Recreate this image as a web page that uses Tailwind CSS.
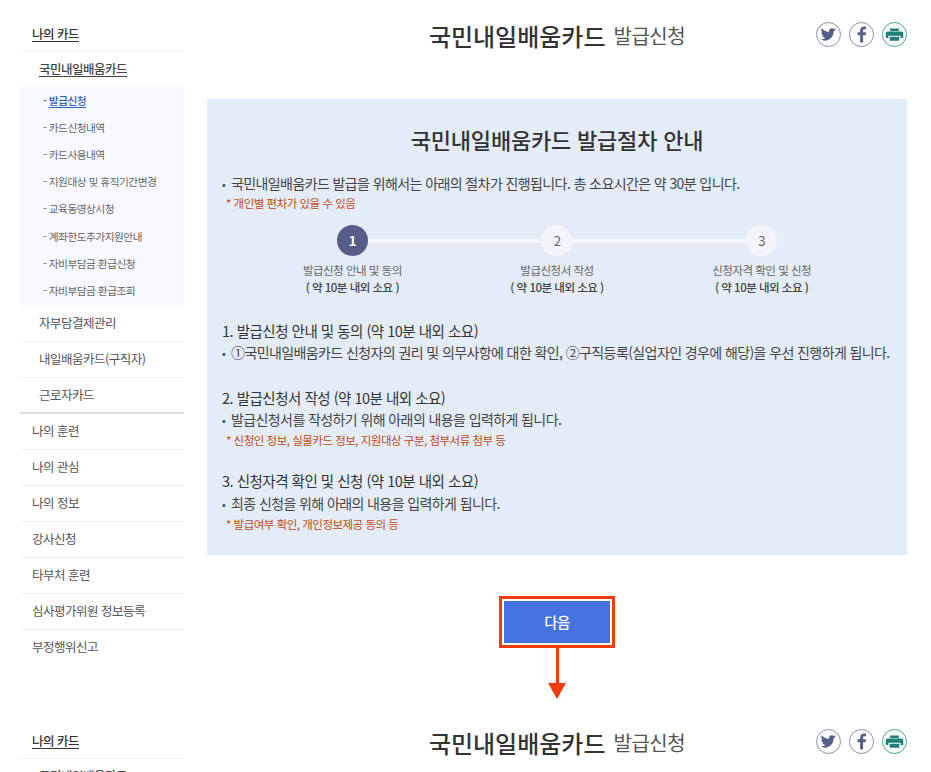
<!DOCTYPE html>
<html lang="ko">
  <head>
    <meta charset="UTF-8" />
    <meta name="viewport" content="width=device-width, initial-scale=1.0" />
    <title>국민내일배움카드 발급신청</title>
    <script src="https://cdn.jsdelivr.net/npm/@tailwindcss/browser@4"></script>
  </head>
  <body class="bg-white">
    <div class="h-[772px] w-[931px] overflow-hidden font-['Noto_Sans_CJK_KR',sans-serif] text-[#444] tracking-[-0.5px]">
      <!-- first capture -->
      <div class="flex h-[707px] items-start pl-5">
        <aside class="w-[164px] shrink-0 pt-[16px] text-[12.5px]">
          <div class="flex h-[36px] items-center border-b border-[#f3f3f3] pt-[1px] pl-3 font-medium text-[#333]">
            <span class="underline underline-offset-2">나의 카드</span>
          </div>
          <div class="flex h-[35px] items-center pl-[19px] font-medium text-[#444]">
            <span class="underline underline-offset-2">국민내일배움카드</span>
          </div>
          <ul class="h-[219px] bg-[#f8f9fe] pl-[23px] text-[10.7px] text-[#666]">
            <li class="flex h-[27.2px] items-center font-medium text-[#2f5cc4]"><span>-&nbsp;<span class="underline underline-offset-2">발급신청</span></span></li>
            <li class="flex h-[27.2px] items-center">- 카드신청내역</li>
            <li class="flex h-[27.2px] items-center">- 카드사용내역</li>
            <li class="flex h-[27.2px] items-center">- 지원대상 및 휴직기간변경</li>
            <li class="flex h-[27.2px] items-center">- 교육동영상시청</li>
            <li class="flex h-[27.2px] items-center">- 계좌한도추가지원안내</li>
            <li class="flex h-[27.2px] items-center">- 자비부담금 환급신청</li>
            <li class="flex h-[27.2px] items-center">- 자비부담금 환급조회</li>
          </ul>
          <div class="flex h-[36px] items-center border-b border-[#f3f3f3] pl-[19px] text-[#555]">자부담결제관리</div>
          <div class="flex h-[36px] items-center border-b border-[#f3f3f3] pl-[19px] text-[#555]">내일배움카드(구직자)</div>
          <div class="flex h-[36px] items-center border-b-2 border-[#ddd] pl-[19px] text-[#555]">근로자카드</div>
          <div class="flex h-[36px] items-center border-b border-[#f0f0f0] pl-3 text-[#555]">나의 훈련</div>
          <div class="flex h-[36px] items-center border-b border-[#f0f0f0] pl-3 text-[#555]">나의 관심</div>
          <div class="flex h-[36px] items-center border-b border-[#f0f0f0] pl-3 text-[#555]">나의 정보</div>
          <div class="flex h-[36px] items-center border-b border-[#f0f0f0] pl-3 text-[#555]">강사신청</div>
          <div class="flex h-[36px] items-center border-b border-[#f0f0f0] pl-3 text-[#555]">타부처 훈련</div>
          <div class="flex h-[36px] items-center border-b border-[#f0f0f0] pl-3 text-[#555]">심사평가위원 정보등록</div>
          <div class="flex h-[36px] items-center pb-[2px] pl-3 text-[#555]">부정행위신고</div>
        </aside>

        <main class="ml-[23px] w-[700px] shrink-0">
          <header class="relative flex h-[99px] justify-center pt-[16px]">
            <h1 class="flex h-[40px] items-center gap-2 text-[24px] font-medium tracking-normal text-[#333]">
              국민내일배움카드 <span class="text-[20px] font-normal tracking-[-0.5px] text-[#555]">발급신청</span>
            </h1>
            <div class="absolute top-[22px] right-0 flex gap-[8px]">
              <span class="flex size-[25px] items-center justify-center rounded-full border border-[#8e93b4]">
                <svg viewBox="0 0 24 24" class="size-[19px] fill-[#565d88]"><path d="M22 5.900c-.7.3-1.500.5-2.400.6.9-.5 1.500-1.300 1.800-2.300-.8.5-1.700.8-2.600 1-1.600-1.700-4.400-1.300-5.600.6-.6 1-.7 2-.4 3C9 8.600 5.700 6.900 3.500 4.200 2.300 6.100 2.900 8.600 4.700 9.800c-.7 0-1.300-.2-1.900-.5 0 2 1.400 3.800 3.300 4.200-.6.2-1.200.2-1.800.1.5 1.700 2.100 2.800 3.800 2.900-1.700 1.300-3.800 1.900-6 1.600 6.100 3.900 14.200.7 15.900-6.600.3-1.100.4-2.300.3-3.400.8-.6 1.400-1.300 1.900-2.200z" /></svg>
              </span>
              <span class="flex size-[25px] items-center justify-center rounded-full border border-[#8e93b4]">
                <svg viewBox="0 0 24 24" class="size-[19px] fill-[#565d88]"><path d="M14 22v-9h3.200l.5-3.700H14V7.200c0-1.100.3-1.800 1.800-1.800h2V2.100C17.400 2 16.300 2 15.100 2 12.300 2 10.300 3.700 10.300 6.800v2.500H7V13h3.300v9z" /></svg>
              </span>
              <span class="flex size-[25px] items-center justify-center rounded-full border-[1.5px] border-[#4aa79c]">
                <svg viewBox="0 0 24 24" class="size-[21px] fill-[#1f8078]"><path d="M7 5h10v3H7zM4 8.500h16a2 2 0 0 1 2 2V16h-3v-2.500H5V16H2v-5.500a2 2 0 0 1 2-2zM6.500 14.500h11V19h-11z" /></svg>
              </span>
            </div>
          </header>

          <section class="h-[456px] bg-[#e4ecf7] pt-[25px] pl-[15px]">
            <h2 class="-ml-[15px] text-center text-[22px] leading-[30px] font-medium tracking-[-0.2px] text-[#333]">국민내일배움카드 발급절차 안내</h2>
            <p class="mt-[19px] text-[14px] leading-[20px] tracking-[-0.6px] text-[#444]"><span class="inline-block w-[9px] text-[11px] leading-none">•</span>국민내일배움카드 발급을 위해서는 아래의 절차가 진행됩니다. 총 소요시간은 약 30분 입니다.</p>
            <p class="pl-[4px] text-[11.5px] leading-[20px] text-[#c24a15]">* 개인별 편차가 있을 수 있음</p>

            <div class="relative mt-[12px] -ml-[15px] grid grid-cols-3 px-[43px] text-center">
              <div class="absolute top-[14px] right-[146px] left-[146px] h-[4px] bg-[#f3f5fa]"></div>
              <div class="relative flex flex-col items-center text-[11.5px] leading-[17px] text-[#666]">
                <span class="mb-[6px] flex size-[31px] items-center justify-center rounded-full bg-[#565d88] text-[13px] font-bold text-white">1</span>
                발급신청 안내 및 동의
                <strong class="font-medium text-[#444]">( 약 10분 내외 소요 )</strong>
              </div>
              <div class="relative flex flex-col items-center text-[11.5px] leading-[17px] text-[#666]">
                <span class="mb-[6px] flex size-[31px] items-center justify-center rounded-full bg-[#f3f5fa] text-[13px]">2</span>
                발급신청서 작성
                <strong class="font-medium text-[#444]">( 약 10분 내외 소요 )</strong>
              </div>
              <div class="relative flex flex-col items-center text-[11.5px] leading-[17px] text-[#666]">
                <span class="mb-[6px] flex size-[31px] items-center justify-center rounded-full bg-[#f3f5fa] text-[13px]">3</span>
                신청자격 확인 및 신청
                <strong class="font-medium text-[#444]">( 약 10분 내외 소요 )</strong>
              </div>
            </div>

            <h3 class="mt-[24px] text-[14.5px] leading-[21px] text-[#333]">1. 발급신청 안내 및 동의 (약 10분 내외 소요)</h3>
            <p class="text-[14px] leading-[22px] tracking-[-0.6px]"><span class="inline-block w-[9px] text-[11px] leading-none">•</span>①국민내일배움카드 신청자의 권리 및 의무사항에 대한 확인, ②구직등록(실업자인 경우에 해당)을 우선 진행하게 됩니다.</p>

            <h3 class="mt-[24px] text-[14.5px] leading-[21px] text-[#333]">2. 발급신청서 작성 (약 10분 내외 소요)</h3>
            <p class="text-[14px] leading-[22px] tracking-[-0.6px]"><span class="inline-block w-[9px] text-[11px] leading-none">•</span>발급신청서를 작성하기 위해 아래의 내용을 입력하게 됩니다.</p>
            <p class="pl-[4px] text-[11.5px] leading-[20px] text-[#c24a15]">* 신청인 정보, 실물카드 정보, 지원대상 구분, 첨부서류 첨부 등</p>

            <h3 class="mt-[20px] text-[14.5px] leading-[22px] text-[#333]">3. 신청자격 확인 및 신청 (약 10분 내외 소요)</h3>
            <p class="text-[14px] leading-[22px] tracking-[-0.6px]"><span class="inline-block w-[9px] text-[11px] leading-none">•</span>최종 신청을 위해 아래의 내용을 입력하게 됩니다.</p>
            <p class="pl-[4px] text-[11.5px] leading-[20px] text-[#c24a15]">* 발급여부 확인, 개인정보제공 동의 등</p>
          </section>

          <div class="mt-[41px] flex flex-col items-center">
            <div class="border-[3px] border-[#f23c0c] p-[2px]">
              <button class="h-[42px] w-[106px] bg-[#4472de] text-[14.5px] font-medium text-white">다음</button>
            </div>
            <div class="h-[35px] w-[3px] bg-[#f23c0c]"></div>
            <div class="size-0 border-x-[9px] border-t-[16px] border-x-transparent border-t-[#f23c0c]"></div>
          </div>
        </main>
      </div>

      <!-- second capture, cut off by the window -->
      <div class="flex items-start pl-5">
        <aside class="w-[164px] shrink-0 pt-[16px] text-[12.5px]">
          <div class="flex h-[36px] items-center border-b border-[#f3f3f3] pt-[1px] pl-3 font-medium text-[#333]">
            <span class="underline underline-offset-2">나의 카드</span>
          </div>
          <div class="flex h-[35px] items-center pl-[19px] font-medium text-[#444]">
            <span class="underline underline-offset-2">국민내일배움카드</span>
          </div>
        </aside>
        <main class="ml-[23px] w-[700px] shrink-0">
          <header class="relative flex h-[99px] justify-center pt-[16px]">
            <h1 class="flex h-[40px] items-center gap-2 text-[24px] font-medium tracking-normal text-[#333]">
              국민내일배움카드 <span class="text-[20px] font-normal tracking-[-0.5px] text-[#555]">발급신청</span>
            </h1>
            <div class="absolute top-[22px] right-0 flex gap-[8px]">
              <span class="flex size-[25px] items-center justify-center rounded-full border border-[#8e93b4]">
                <svg viewBox="0 0 24 24" class="size-[19px] fill-[#565d88]"><path d="M22 5.900c-.7.3-1.500.5-2.400.6.9-.5 1.500-1.300 1.800-2.300-.8.5-1.700.8-2.600 1-1.600-1.700-4.400-1.300-5.600.6-.6 1-.7 2-.4 3C9 8.600 5.700 6.900 3.500 4.200 2.300 6.100 2.900 8.600 4.700 9.800c-.7 0-1.300-.2-1.900-.5 0 2 1.400 3.800 3.300 4.200-.6.2-1.200.2-1.800.1.5 1.700 2.100 2.800 3.800 2.900-1.700 1.300-3.800 1.900-6 1.600 6.100 3.900 14.200.7 15.900-6.600.3-1.100.4-2.300.3-3.400.8-.6 1.400-1.300 1.900-2.200z" /></svg>
              </span>
              <span class="flex size-[25px] items-center justify-center rounded-full border border-[#8e93b4]">
                <svg viewBox="0 0 24 24" class="size-[19px] fill-[#565d88]"><path d="M14 22v-9h3.200l.5-3.700H14V7.200c0-1.100.3-1.800 1.800-1.800h2V2.100C17.400 2 16.300 2 15.100 2 12.300 2 10.300 3.700 10.300 6.800v2.500H7V13h3.300v9z" /></svg>
              </span>
              <span class="flex size-[25px] items-center justify-center rounded-full border-[1.5px] border-[#4aa79c]">
                <svg viewBox="0 0 24 24" class="size-[21px] fill-[#1f8078]"><path d="M7 5h10v3H7zM4 8.500h16a2 2 0 0 1 2 2V16h-3v-2.500H5V16H2v-5.500a2 2 0 0 1 2-2zM6.500 14.500h11V19h-11z" /></svg>
              </span>
            </div>
          </header>
        </main>
      </div>
    </div>
  </body>
</html>
